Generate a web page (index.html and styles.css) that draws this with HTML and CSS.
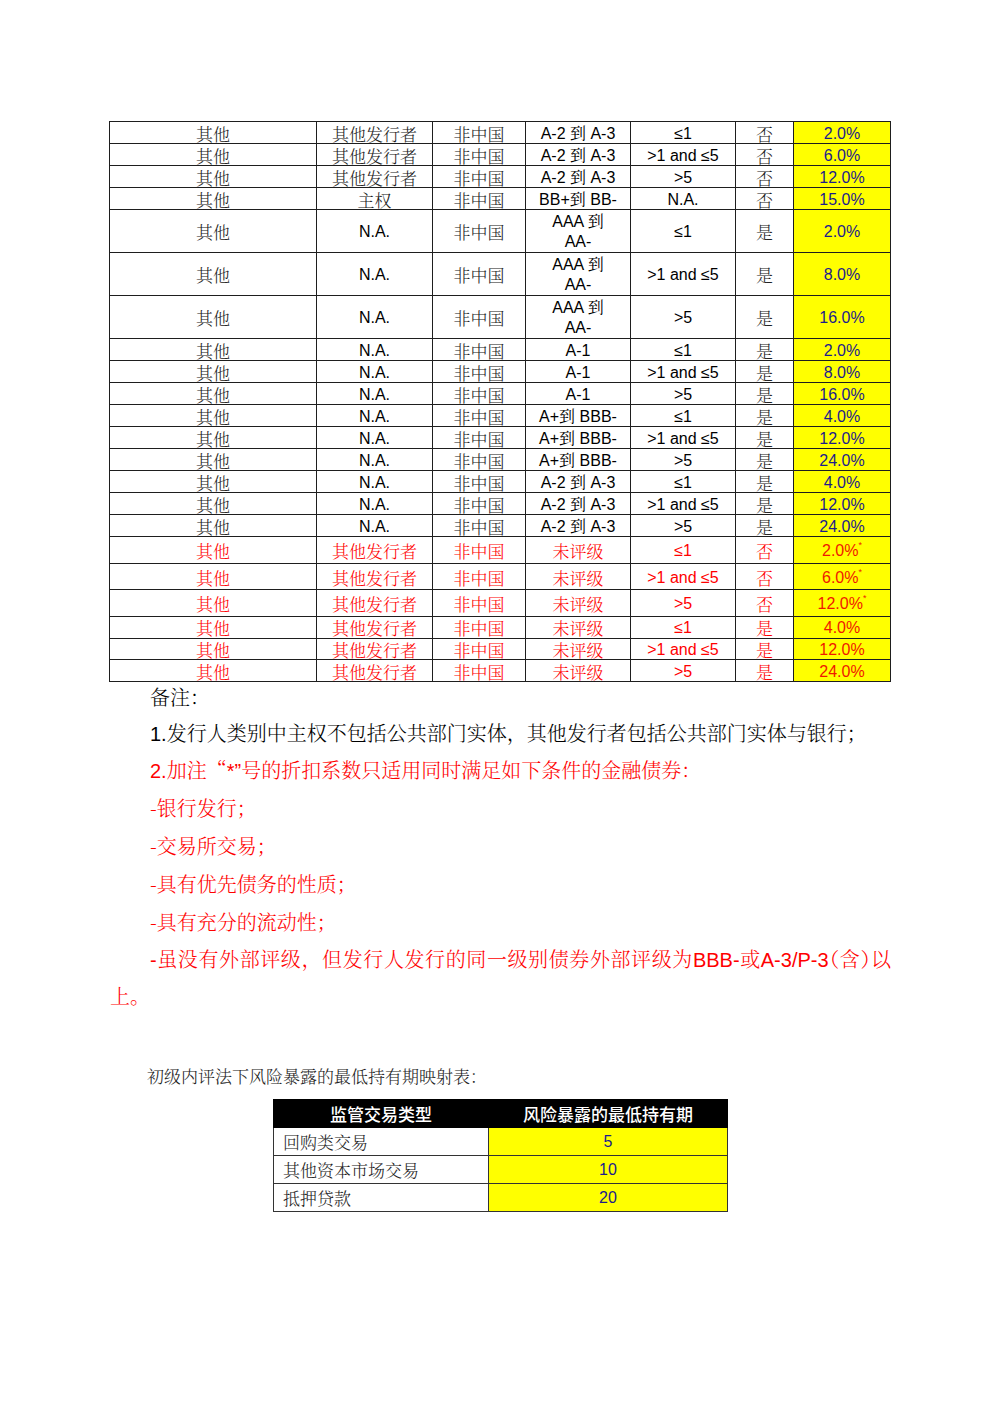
FILE: index.html
```html
<!DOCTYPE html>
<html lang="zh-CN">
<head>
<meta charset="utf-8">
<title>折扣系数表</title>
<link rel="stylesheet" href="styles.css">
</head>
<body>
<div class="page">
  <table class="rates">
    <colgroup>
      <col class="c1"><col class="c2"><col class="c3"><col class="c4"><col class="c5"><col class="c6"><col class="c7">
    </colgroup>
    <tbody>
      <tr class="s"><td class="zh">其他</td><td class="zh">其他发行者</td><td class="zh">非中国</td><td>A-2 到 A-3</td><td>≤1</td><td class="zh">否</td><td class="pct">2.0%</td></tr>
      <tr class="s"><td class="zh">其他</td><td class="zh">其他发行者</td><td class="zh">非中国</td><td>A-2 到 A-3</td><td>&gt;1 and ≤5</td><td class="zh">否</td><td class="pct">6.0%</td></tr>
      <tr class="s"><td class="zh">其他</td><td class="zh">其他发行者</td><td class="zh">非中国</td><td>A-2 到 A-3</td><td>&gt;5</td><td class="zh">否</td><td class="pct">12.0%</td></tr>
      <tr class="s"><td class="zh">其他</td><td class="zh">主权</td><td class="zh">非中国</td><td>BB+到 BB-</td><td>N.A.</td><td class="zh">否</td><td class="pct">15.0%</td></tr>
      <tr class="t"><td class="zh">其他</td><td>N.A.</td><td class="zh">非中国</td><td>AAA 到<br>AA-</td><td>≤1</td><td class="zh">是</td><td class="pct">2.0%</td></tr>
      <tr class="t"><td class="zh">其他</td><td>N.A.</td><td class="zh">非中国</td><td>AAA 到<br>AA-</td><td>&gt;1 and ≤5</td><td class="zh">是</td><td class="pct">8.0%</td></tr>
      <tr class="t"><td class="zh">其他</td><td>N.A.</td><td class="zh">非中国</td><td>AAA 到<br>AA-</td><td>&gt;5</td><td class="zh">是</td><td class="pct">16.0%</td></tr>
      <tr class="s"><td class="zh">其他</td><td>N.A.</td><td class="zh">非中国</td><td>A-1</td><td>≤1</td><td class="zh">是</td><td class="pct">2.0%</td></tr>
      <tr class="s"><td class="zh">其他</td><td>N.A.</td><td class="zh">非中国</td><td>A-1</td><td>&gt;1 and ≤5</td><td class="zh">是</td><td class="pct">8.0%</td></tr>
      <tr class="s"><td class="zh">其他</td><td>N.A.</td><td class="zh">非中国</td><td>A-1</td><td>&gt;5</td><td class="zh">是</td><td class="pct">16.0%</td></tr>
      <tr class="s"><td class="zh">其他</td><td>N.A.</td><td class="zh">非中国</td><td>A+到 BBB-</td><td>≤1</td><td class="zh">是</td><td class="pct">4.0%</td></tr>
      <tr class="s"><td class="zh">其他</td><td>N.A.</td><td class="zh">非中国</td><td>A+到 BBB-</td><td>&gt;1 and ≤5</td><td class="zh">是</td><td class="pct">12.0%</td></tr>
      <tr class="s"><td class="zh">其他</td><td>N.A.</td><td class="zh">非中国</td><td>A+到 BBB-</td><td>&gt;5</td><td class="zh">是</td><td class="pct">24.0%</td></tr>
      <tr class="s"><td class="zh">其他</td><td>N.A.</td><td class="zh">非中国</td><td>A-2 到 A-3</td><td>≤1</td><td class="zh">是</td><td class="pct">4.0%</td></tr>
      <tr class="s"><td class="zh">其他</td><td>N.A.</td><td class="zh">非中国</td><td>A-2 到 A-3</td><td>&gt;1 and ≤5</td><td class="zh">是</td><td class="pct">12.0%</td></tr>
      <tr class="s"><td class="zh">其他</td><td>N.A.</td><td class="zh">非中国</td><td>A-2 到 A-3</td><td>&gt;5</td><td class="zh">是</td><td class="pct">24.0%</td></tr>
      <tr class="rt red"><td class="zh">其他</td><td class="zh">其他发行者</td><td class="zh">非中国</td><td class="zh">未评级</td><td>≤1</td><td class="zh">否</td><td class="pct">2.0%<span class="star">*</span></td></tr>
      <tr class="rt red"><td class="zh">其他</td><td class="zh">其他发行者</td><td class="zh">非中国</td><td class="zh">未评级</td><td>&gt;1 and ≤5</td><td class="zh">否</td><td class="pct">6.0%<span class="star">*</span></td></tr>
      <tr class="rt red"><td class="zh">其他</td><td class="zh">其他发行者</td><td class="zh">非中国</td><td class="zh">未评级</td><td>&gt;5</td><td class="zh">否</td><td class="pct">12.0%<span class="star">*</span></td></tr>
      <tr class="rs red"><td class="zh">其他</td><td class="zh">其他发行者</td><td class="zh">非中国</td><td class="zh">未评级</td><td>≤1</td><td class="zh">是</td><td class="pct">4.0%</td></tr>
      <tr class="rs red"><td class="zh">其他</td><td class="zh">其他发行者</td><td class="zh">非中国</td><td class="zh">未评级</td><td>&gt;1 and ≤5</td><td class="zh">是</td><td class="pct">12.0%</td></tr>
      <tr class="rs red"><td class="zh">其他</td><td class="zh">其他发行者</td><td class="zh">非中国</td><td class="zh">未评级</td><td>&gt;5</td><td class="zh">是</td><td class="pct">24.0%</td></tr>
    </tbody>
  </table>

  <div class="notes">
    <p class="head">备注：</p>
    <p>1.发行人类别中主权不包括公共部门实体，其他发行者包括公共部门实体与银行；</p>
    <p class="warn">2.加注<span class="fw">“</span>*”号的折扣系数只适用同时满足如下条件的金融债券：</p>
    <p class="warn"><span class="dash">-</span>银行发行；</p>
    <p class="warn"><span class="dash">-</span>交易所交易；</p>
    <p class="warn"><span class="dash">-</span>具有优先债务的性质；</p>
    <p class="warn"><span class="dash">-</span>具有充分的流动性；</p>
    <p class="warn">-虽没有外部评级，但发行人发行的同一级别债券外部评级为BBB-或A-3/P-3<span class="half">（含）</span>以上。</p>
  </div>

  <p class="caption">初级内评法下风险暴露的最低持有期映射表：</p>
  <table class="period">
    <colgroup><col class="p1"><col class="p2"></colgroup>
    <thead>
      <tr><th>监管交易类型</th><th>风险暴露的最低持有期</th></tr>
    </thead>
    <tbody>
      <tr><td class="kind">回购类交易</td><td class="num">5</td></tr>
      <tr><td class="kind">其他资本市场交易</td><td class="num">10</td></tr>
      <tr><td class="kind">抵押贷款</td><td class="num">20</td></tr>
    </tbody>
  </table>
</div>
</body>
</html>
```

FILE: styles.css
```css
html, body {
  margin: 0;
  padding: 0;
  background: #ffffff;
}

body {
  font-family: "Liberation Sans", "Noto Serif CJK SC", "Noto Sans CJK SC", sans-serif;
  color: #000000;
}

.page {
  padding: 121px 0 0 109px;
  width: 782px;
}

/* ---------- main rates table ---------- */
.rates {
  border-collapse: collapse;
  table-layout: fixed;
  width: 781px;
}

.rates .c1 { width: 207px; }
.rates .c2 { width: 116px; }
.rates .c3 { width: 93px; }
.rates .c4 { width: 105px; }
.rates .c5 { width: 105px; }
.rates .c6 { width: 58px; }
.rates .c7 { width: 97px; }

.rates td {
  border: 1px solid #1e1e1e;
  padding: 2px 0 0 0;
  text-align: center;
  vertical-align: middle;
  font-size: 16px;
  line-height: 18px;
  white-space: nowrap;
  color: #000000;
}

.rates td.zh {
  font-family: "Noto Serif CJK SC", "Noto Sans CJK SC", serif;
  font-size: 17px;
  font-weight: 300;
  color: #222222;
}

.rates tr.s { height: 22px; }
.rates tr.t { height: 43px; }
.rates tr.rt { height: 26.7px; }
.rates tr.rs { height: 21.7px; }

.rates tr.t td { line-height: 20px; }
.rates tr.rs td { line-height: 17px; padding-top: 1px; }

.rates td.pct {
  background: #ffff00;
  color: #1c1c8c;
}

.rates tr.red td,
.rates tr.red td.zh {
  color: #ff0000;
}

.rates tr.red td.pct {
  color: #f01800;
}

.star {
  font-size: 9px;
  vertical-align: 8px;
  line-height: 0;
}

/* ---------- notes ---------- */
.notes {
  width: 781px;
  margin-left: 1px;
}

.notes p {
  margin: 0;
  text-indent: 40px;
  font-family: "Liberation Sans", "Noto Serif CJK SC", "Noto Sans CJK SC", sans-serif;
  font-size: 20px;
  line-height: 36.8px;
  text-align: justify;
  font-weight: 300;
}

.notes p.head {
  line-height: 33.5px;
}

.notes p.warn {
  color: #ff0000;
}

.fw {
  font-family: "Noto Serif CJK SC", "Noto Sans CJK SC", serif;
  font-feature-settings: "fwid";
}

.half {
  font-family: "Noto Serif CJK SC", "Noto Sans CJK SC", serif;
  font-feature-settings: "halt";
}

.dash {
  font-family: "Noto Serif CJK SC", "Noto Sans CJK SC", serif;
}

/* ---------- caption + period table ---------- */
.caption {
  margin: 48px 0 0 38px;
  font-family: "Noto Serif CJK SC", "Noto Sans CJK SC", serif;
  font-size: 17px;
  line-height: 24px;
  font-weight: 300;
  color: #222222;
}

.period {
  margin: 11px 0 0 164px;
  border-collapse: collapse;
  table-layout: fixed;
  width: 454px;
}

.period .p1 { width: 215px; }
.period .p2 { width: 239px; }

.period th {
  background: #000000;
  color: #ffffff;
  font-family: "Noto Sans CJK SC", sans-serif;
  font-weight: 500;
  font-size: 17px;
  height: 27px;
  padding: 0;
  border: 1px solid #000000;
  text-align: center;
}

.period td {
  border: 1px solid #333333;
  height: 27px;
  padding: 0;
  font-size: 16px;
}

.period td.kind {
  text-align: left;
  padding-left: 9px;
  font-family: "Noto Serif CJK SC", "Noto Sans CJK SC", serif;
  font-size: 17px;
  font-weight: 300;
  color: #222222;
}

.period td.num {
  text-align: center;
  background: #ffff00;
  color: #1c1c8c;
  font-family: "Liberation Sans", sans-serif;
}
```
